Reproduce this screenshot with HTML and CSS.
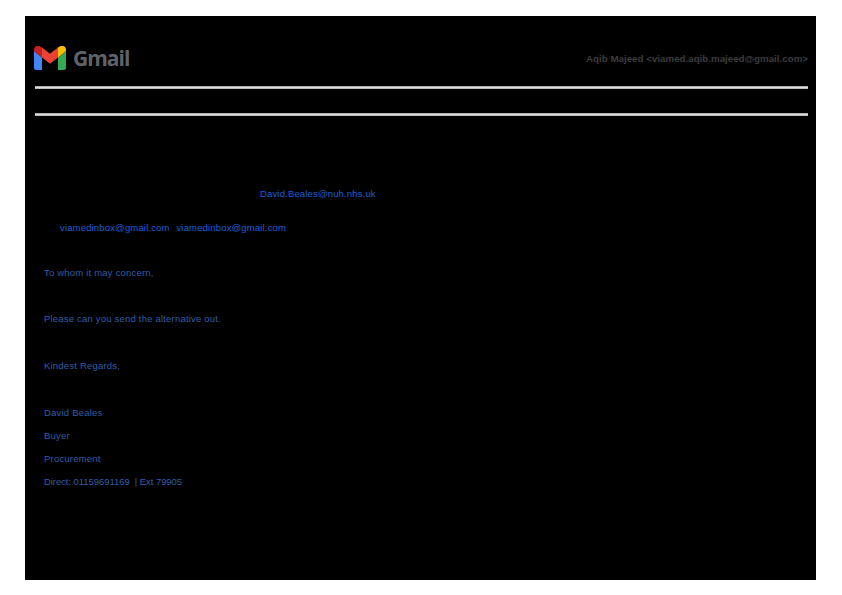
FILE: index.html
```html
<!DOCTYPE html>
<html lang="en">
<head>
<meta charset="utf-8">
<title>Gmail</title>
<link rel="stylesheet" href="styles.css">
</head>
<body>
<main class="sheet">
  <header class="top">
    <div class="brand">
      <svg class="logo" viewBox="0 0 32 24" width="32" height="24" aria-hidden="true">
        <path fill="#4285f4" d="M0 3v18.500a2.500 2.500 0 0 0 2.500 2.500H8V11.500L0 5z"/>
        <path fill="#34a853" d="M24 11.500V24h5.500a2.500 2.500 0 0 0 2.500-2.500V5z"/>
        <path fill="#fbbc04" d="M24 1.500v10L32 5V3.500C32 .5 28.500-1 26.200.2z"/>
        <path fill="#ea4335" d="M8 11.500v-10l8 6.300 8-6.300v10L16 17.800z"/>
        <path fill="#c5221f" d="M0 3.500V5l8 6.500v-10L5.800.2C3.500-1 0 .5 0 3.500z"/>
      </svg>
      <span class="wordmark">Gmail</span>
    </div>
    <span class="account">Aqib Majeed &lt;viamed.aqib.majeed@gmail.com&gt;</span>
  </header>
  <hr class="rule">
  <div class="subject"></div>
  <hr class="rule">
  <section class="meta">
    <p class="from"><a class="link">David.Beales@nuh.nhs.uk</a></p>
    <p class="to"><a class="link">viamedinbox@gmail.com</a> <a class="link">viamedinbox@gmail.com</a></p>
  </section>
  <section class="message">
    <p class="para">To whom it may concern,</p>
    <p class="para">Please can you send the alternative out.</p>
    <p class="para">Kindest Regards,</p>
    <div class="signature">
      <p>David Beales</p>
      <p>Buyer</p>
      <p>Procurement</p>
      <p class="direct">Direct: 01159691169&nbsp; | Ext 79905</p>
    </div>
  </section>
</main>
</body>
</html>
```
FILE: styles.css
```css
html, body {
  margin: 0;
  background: #fff;
}
body {
  width: 842px;
  height: 595px;
  overflow: hidden;
}
.sheet {
  box-sizing: border-box;
  width: 791px;
  height: 564px;
  margin: 16px 0 0 25px;
  padding: 30px 8px 0 10px;
  background: #000;
  font-family: "Liberation Sans", Arial, sans-serif;
}
.top {
  display: flex;
  justify-content: space-between;
  align-items: center;
  height: 24px;
  margin-left: -1px;
}
.brand {
  display: flex;
  align-items: center;
  gap: 7px;
}
.logo {
  display: block;
}
.wordmark {
  color: #5f6368;
  font-family: "Open Sans", sans-serif;
  font-size: 21px;
  font-weight: 700;
  letter-spacing: -1px;
  line-height: 22px;
}
.account {
  color: #3c3c3c;
  font-size: 9.750px;
  font-weight: 700;
}
.rule {
  height: 3px;
  margin: 16px 0 0;
  border: 0;
  background: linear-gradient(#999, #ddd 50%, #aaa);
}
.subject {
  height: 24px;
}
.rule + .subject + .rule {
  margin-top: 0;
}
.meta {
  font-size: 9.500px;
  line-height: 12px;
  letter-spacing: 0.16px;
}
.meta p {
  margin: 0;
}
.link {
  color: #1a5fdc;
}
.from {
  padding: 72px 0 0 225px;
}
.to {
  padding: 22px 0 0 25px;
  word-spacing: 4px;
}
.message {
  padding: 32.900px 0 0 9px;
  color: #2f5ea8;
  font-size: 9.500px;
  line-height: 12px;
  letter-spacing: 0.2px;
}
.para {
  margin: 0 0 34.500px;
}
.signature {
  padding-top: 0.600px;
}
.signature p {
  margin: 0 0 11px;
}
.signature .direct {
  letter-spacing: -0.060px;
}
```
